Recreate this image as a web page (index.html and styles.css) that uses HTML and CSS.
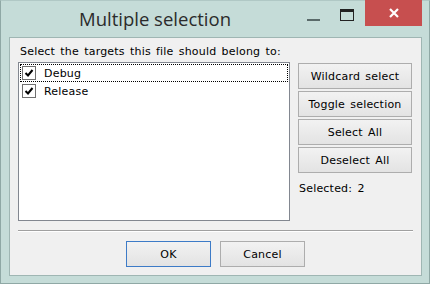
FILE: index.html
```html
<!DOCTYPE html>
<html lang="en">
<head>
    <meta charset="UTF-8">
    <title>Multiple selection</title>
    <link rel="stylesheet" href="styles.css">
</head>
<body>

<div class="window">
    <div class="titlebar">
        <div class="title">Multiple selection</div>
        <div class="controls">
            <span class="ctl-min"></span>
            <span class="ctl-max"></span>
            <span class="ctl-close">
                <svg width="12" height="12" viewBox="0 0 12 12">
                    <path d="M2 2 L10 10 M10 2 L2 10" stroke="#fff" stroke-width="2.2" fill="none"/>
                </svg>
            </span>
        </div>
    </div>

    <div class="client">
        <div class="prompt">Select the targets this file should belong to:</div>

        <div class="main">
            <div class="listbox">
                <div class="item focused">
                    <span class="check">
                        <svg width="12" height="12" viewBox="0 0 12 12">
                            <path d="M2.5 6 L5 8.5 L9.5 3" stroke="#000" stroke-width="2" fill="none"/>
                        </svg>
                    </span>
                    <span>Debug</span>
                </div>
                <div class="item">
                    <span class="check">
                        <svg width="12" height="12" viewBox="0 0 12 12">
                            <path d="M2.5 6 L5 8.5 L9.5 3" stroke="#000" stroke-width="2" fill="none"/>
                        </svg>
                    </span>
                    <span>Release</span>
                </div>
            </div>

            <div class="side">
                <button class="btn side-btn">Wildcard select</button>
                <button class="btn side-btn">Toggle selection</button>
                <button class="btn side-btn">Select All</button>
                <button class="btn side-btn">Deselect All</button>
                <div class="count">Selected: 2</div>
            </div>
        </div>

        <div class="separator"></div>

        <div class="actions">
            <button class="btn act-btn default">OK</button>
            <button class="btn act-btn">Cancel</button>
        </div>
    </div>
</div>

</body>
</html>
```

FILE: styles.css
```css
body {
    margin: 0;
    padding: 0;
    background: #fff;
    font-family: 'DejaVu Sans', Verdana, sans-serif;
    font-size: 11px;
    letter-spacing: 0.2px;
    word-spacing: 1.5px;
    color: #000;
}

.window {
    width: 430px;
    height: 284px;
    box-sizing: border-box;
    background: #c5dcd8;
    border: 1px solid #8fa8a5;
    border-top-color: #b0c8c5;
    display: flex;
    flex-direction: column;
}

.titlebar {
    height: 36px;
    display: flex;
    align-items: flex-start;
}

.title {
    flex: 1;
    text-align: center;
    font-family: 'Open Sans', 'Noto Sans', sans-serif;
    font-size: 18.5px;
    letter-spacing: 0;
    word-spacing: 0;
    color: #2b2b2b;
    padding-top: 5px;
    padding-left: 2px;
}

.controls {
    display: flex;
    align-items: flex-start;
    margin-right: 7px;
}

.ctl-min {
    width: 13px;
    height: 2px;
    background: #5a6a6a;
    margin-top: 18px;
}

.ctl-max {
    width: 12px;
    height: 8px;
    border: 1px solid #222;
    border-top-width: 3px;
    margin-left: 20px;
    margin-top: 8px;
}

.ctl-close {
    width: 57px;
    height: 26px;
    margin-left: 11px;
    margin-top: -1px;
    background: #c74f4f;
    display: flex;
    align-items: center;
    justify-content: center;
}

.client {
    flex: 1;
    margin: 0 7px 7px 8px;
    background: #f0f0f0;
    border: 1px solid #9fb6b3;
    padding: 0 8px;
    display: flex;
    flex-direction: column;
}

.prompt {
    margin-top: 7px;
    padding-left: 2px;
    line-height: 14px;
}

.main {
    display: flex;
    gap: 8px;
    margin-top: 3px;
}

.listbox {
    width: 272px;
    height: 159px;
    box-sizing: border-box;
    background: #fff;
    border: 1px solid #828790;
    padding: 1px;
}

.item {
    height: 18px;
    display: flex;
    align-items: center;
    gap: 8px;
    padding-left: 1px;
    box-sizing: border-box;
    border: 1px dotted transparent;
}

.item.focused {
    border-color: #000;
}

.check {
    width: 14px;
    height: 14px;
    box-sizing: border-box;
    border: 1px solid #707070;
    background: #fff;
    display: flex;
    align-items: center;
    justify-content: center;
}

.side {
    width: 114px;
    display: flex;
    flex-direction: column;
    gap: 2px;
    margin-top: 1px;
}

.btn {
    font-family: 'DejaVu Sans', Verdana, sans-serif;
    font-size: 11px;
    letter-spacing: 0.2px;
    word-spacing: 1.5px;
    color: #000;
    background: linear-gradient(180deg, #f2f2f2, #e3e3e3);
    border: 1px solid #adadad;
    border-radius: 0;
    padding: 0;
    margin: 0;
}

.side-btn {
    height: 26px;
}

.count {
    margin-top: 7px;
    padding-left: 1px;
    line-height: 14px;
}

.separator {
    margin-top: 9px;
    height: 1px;
    background: #a0a0a0;
    border-bottom: 1px solid #fff;
}

.actions {
    display: flex;
    justify-content: center;
    gap: 9px;
    margin-top: 9px;
}

.act-btn {
    width: 85px;
    height: 26px;
}

.act-btn.default {
    border-color: #3d7bc7;
}
```
